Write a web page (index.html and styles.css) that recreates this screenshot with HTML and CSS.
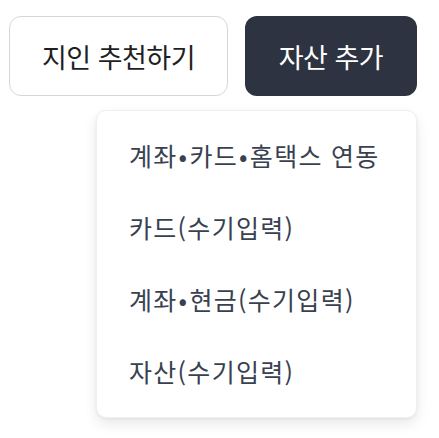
FILE: index.html
```html
<!DOCTYPE html>
<html lang="ko">
<head>
<meta charset="utf-8">
<link rel="stylesheet" href="styles.css">
</head>
<body>
<div class="wrap">
  <div class="actions">
    <button class="btn btn-outline">지인 추천하기</button>
    <div class="add">
      <button class="btn btn-dark">자산 추가</button>
      <ul class="menu">
        <li class="menu-item">계좌<span class="dot">•</span>카드<span class="dot">•</span>홈택스 연동</li>
        <li class="menu-item">카드(수기입력)</li>
        <li class="menu-item">계좌<span class="dot">•</span>현금(수기입력)</li>
        <li class="menu-item">자산(수기입력)</li>
      </ul>
    </div>
  </div>
</div>
</body>
</html>
```
FILE: styles.css
```css
html, body {
  margin: 0;
  padding: 0;
  background: #ffffff;
}
body {
  font-family: "Noto Sans CJK KR", "Noto Sans", sans-serif;
  width: 439px;
  height: 438px;
  overflow: hidden;
}
.wrap {
  padding: 16px 22px 0 9px;
}
.actions {
  display: flex;
  gap: 17px;
  align-items: flex-start;
}
.btn {
  font-family: inherit;
  font-size: 27px;
  font-weight: 400;
  letter-spacing: -0.5px;
  height: 80px;
  border-radius: 12px;
  margin: 0;
  padding: 0;
  cursor: pointer;
}
.btn-outline {
  width: 219px;
  background: #ffffff;
  border: 1.5px solid #d6d6dc;
  color: #1f1f23;
}
.add {
  position: relative;
}
.btn-dark {
  width: 172px;
  background: #2d3341;
  border: none;
  color: #ffffff;
}
.menu {
  position: absolute;
  right: 0;
  top: 94px;
  width: 321px;
  margin: 0;
  padding: 8px 0 10px;
  list-style: none;
  background: #ffffff;
  border: 1px solid #f0f0f2;
  border-radius: 10px;
  box-shadow: 0 6px 14px rgba(0, 0, 0, 0.09), 0 1px 3px rgba(0, 0, 0, 0.06);
  box-sizing: border-box;
}
.menu-item {
  height: 72px;
  display: flex;
  align-items: center;
  padding-left: 32px;
  font-size: 25px;
  font-weight: 400;
  letter-spacing: 1.3px;
  color: #394150;
}
.dot {
  margin: 0 1px;
}
```
